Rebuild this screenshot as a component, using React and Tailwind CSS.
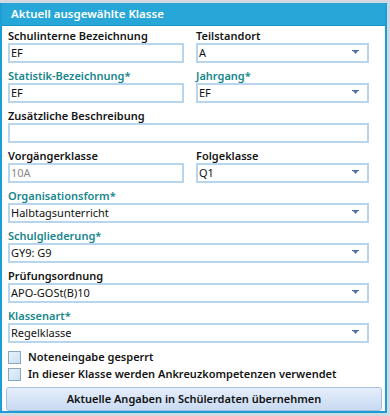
import React from "react";

const font = { fontFamily: '"Noto Sans", "Open Sans", sans-serif' };

const Arrow = () => (
  <svg width="7" height="5" viewBox="0 0 7 5" className="shrink-0">
    <rect x="0" y="0" width="7" height="1" fill="#4f6fa8" />
    <polygon points="1,1 6,1 3.5,4" fill="#4f6fa8" />
  </svg>
);

const Label = ({ children, teal, first }) => (
  <div
    className={`${first ? "h-[17px]" : "h-[20px]"} flex items-end text-[11px] font-semibold leading-[15px] ${
      teal ? "text-[#17868d]" : "text-[#151515]"
    }`}
  >
    {children}
  </div>
);

const Input = ({ value, select, disabled }) => (
  <div className="h-[20px] border-2 border-[#b7d6ee] bg-white flex items-center pl-[1px] pr-[8px]">
    <span className={`flex-1 text-[11px] leading-[16px] ${disabled ? "text-[#8a8a8a]" : "text-[#111]"}`}>{value}</span>
    {select && <Arrow />}
  </div>
);

const Field = ({ label, teal, first, ...rest }) => (
  <div className="flex flex-col">
    <Label teal={teal} first={first}>{label}</Label>
    <Input {...rest} />
  </div>
);

const Check = ({ children }) => (
  <label className="h-[17px] flex items-center gap-[7px]">
    <span className="w-[13px] h-[13px] border border-[#8fa6bf] bg-gradient-to-br from-[#e6f2fb] to-[#c8e0f2]" />
    <span className="text-[11px] font-semibold text-[#151515]">{children}</span>
  </label>
);

export default function App() {
  return (
    <div className="w-[390px] h-[416px] bg-[#d3d9e0] pt-[3px]" style={font}>
      <div className="w-[387px] h-[410px] bg-white border-x-2 border-b-2 border-[#1b9ed5] flex flex-col">
        <div className="h-[24px] bg-[#27a7d8] border-b border-[#1794c9] flex items-center pl-[9px]">
          <span className="text-white text-[11.5px] font-semibold">Aktuell ausgewählte Klasse</span>
        </div>
        <div className="pl-[6px]">
          <div className="grid grid-cols-[176px_173px] gap-x-3 w-[361px]">
            <Field first label="Schulinterne Bezeichnung" value="EF" />
            <Field first label="Teilstandort" value="A" select />
            <Field teal label="Statistik-Bezeichnung*" value="EF" />
            <Field teal label="Jahrgang*" value="EF" select />
            <div className="col-span-2">
              <Field label="Zusätzliche Beschreibung" value="" />
            </div>
            <Field label="Vorgängerklasse" value="10A" disabled />
            <Field label="Folgeklasse" value="Q1" select />
            <div className="col-span-2 flex flex-col">
              <Field teal label="Organisationsform*" value="Halbtagsunterricht" select />
              <Field teal label="Schulgliederung*" value="GY9: G9" select />
              <Field label="Prüfungsordnung" value="APO-GOSt(B)10" select />
              <Field teal label="Klassenart*" value="Regelklasse" select />
            </div>
          </div>
          <div className="flex flex-col mt-[6px]">
            <Check>Noteneingabe gesperrt</Check>
            <Check>In dieser Klasse werden Ankreuzkompetenzen verwendet</Check>
          </div>
        </div>
        <div className="px-[4px] mt-[2px]">
          <button className="w-[376px] h-[24px] rounded-[3px] border border-[#a6bee0] bg-gradient-to-b from-[#e6eefb] via-[#d6e4f6] to-[#c9daf2] text-[11px] font-semibold text-[#111]">
            Aktuelle Angaben in Schülerdaten übernehmen
          </button>
        </div>
      </div>
    </div>
  );
}
